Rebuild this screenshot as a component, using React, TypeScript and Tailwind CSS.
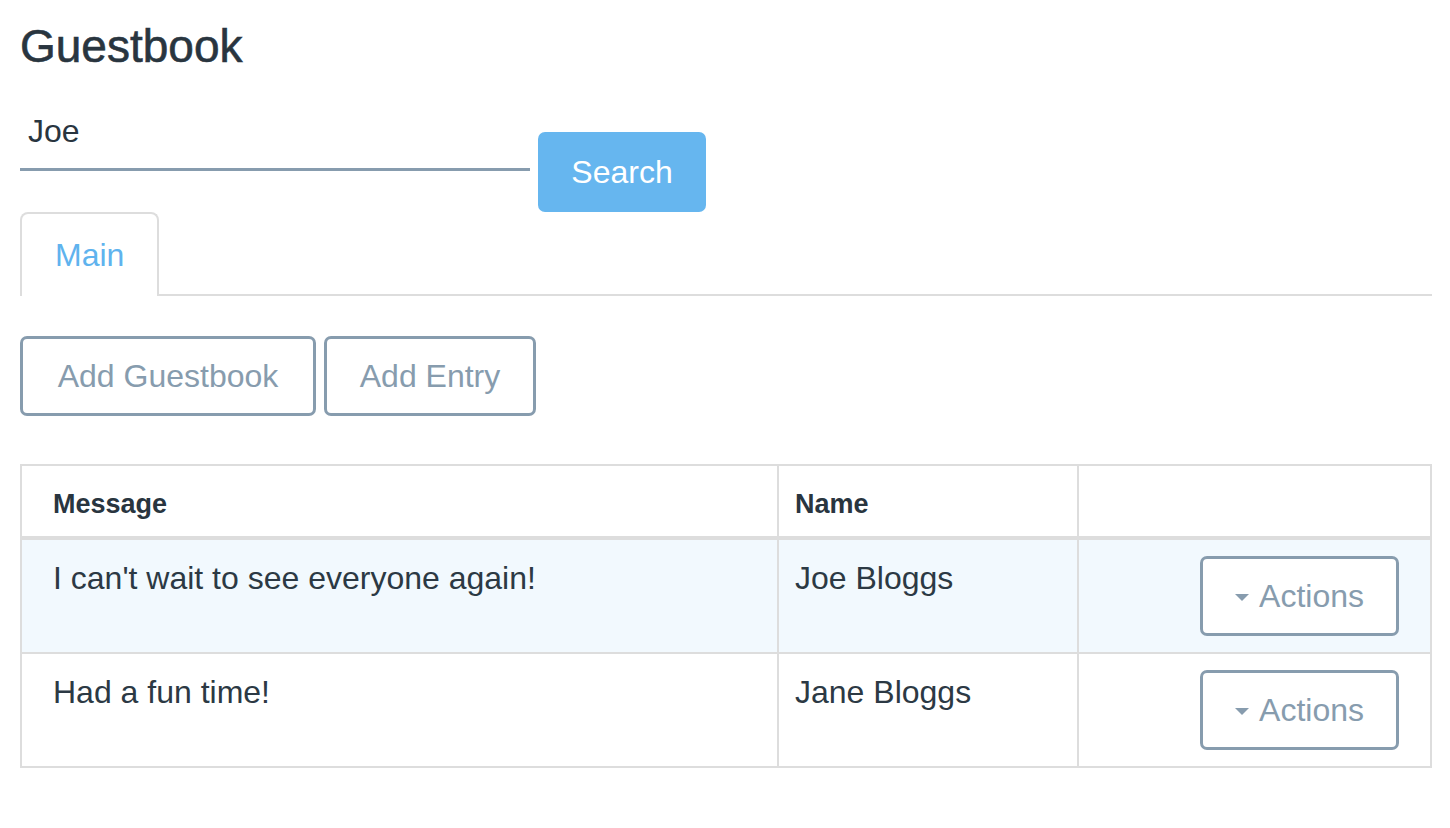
import React from "react";

const rows = [
  { message: "I can't wait to see everyone again!", name: "Joe Bloggs", highlight: true },
  { message: "Had a fun time!", name: "Jane Bloggs", highlight: false },
];

function Caret() {
  return (
    <svg width="14" height="7" viewBox="0 0 14 7" className="shrink-0">
      <path d="M0 0 L14 0 L7 7 Z" fill="#879cae" />
    </svg>
  );
}

function ActionsButton() {
  return (
    <button className="flex h-[80px] w-[199px] items-center justify-center gap-[10px] rounded-[7px] border-[3px] border-[#879cae] bg-white text-[32px] leading-[40px] text-[#879cae]">
      <span className="mt-[2px]"><Caret /></span>
      <span>Actions</span>
    </button>
  );
}

export default function App() {
  return (
    <div
      className="min-h-[828px] w-full bg-white pl-[20px] pr-[18px] text-[#29353f]"
      style={{ fontFamily: '"Liberation Sans", Arial, Helvetica, sans-serif' }}
    >
      <h1 className="pt-[21px] text-[46px] leading-[50px] [-webkit-text-stroke:0.6px]">Guestbook</h1>

      <div className="mt-[29px] flex items-start gap-[8px]">
        <input
          defaultValue="Joe"
          className="h-[71px] w-[510px] border-b-[3px] border-[#879cae] bg-transparent pl-[8px] pt-[11px] pb-[17px] text-[32px] leading-[40px] text-[#29353f] outline-none"
        />
        <button className="mt-[32px] h-[80px] w-[168px] rounded-[7px] bg-[#66b6ef] text-[32px] leading-[40px] text-white">
          Search
        </button>
      </div>

      <div className="flex">
        <div className="rounded-t-[8px] border-2 border-b-0 border-[#dddddd] px-[33px] pt-[21px] pb-[21px] text-[32px] leading-[40px] text-[#5fb3ee]">
          Main
        </div>
        <div className="flex-1 border-b-2 border-[#dddddd]" />
      </div>

      <div className="mt-[40px] flex gap-[8px]">
        <button className="h-[80px] w-[296px] rounded-[7px] border-[3px] border-[#879cae] text-[32px] leading-[40px] text-[#879cae]">
          Add Guestbook
        </button>
        <button className="h-[80px] w-[212px] rounded-[7px] border-[3px] border-[#879cae] text-[32px] leading-[40px] text-[#879cae]">
          Add Entry
        </button>
      </div>

      <table className="mt-[48px] w-[1412px] border-collapse border-2 border-[#dddddd]">
        <thead>
          <tr className="border-b-4 border-[#dddddd]">
            <th className="h-[73px] w-[757px] border-r-2 border-[#dddddd] pl-[31px] pt-[20px] text-left align-top text-[27px] font-bold leading-[36px] text-[#29353f]">
              Message
            </th>
            <th className="w-[300px] border-r-2 border-[#dddddd] pl-[16px] pt-[20px] text-left align-top text-[27px] font-bold leading-[36px] text-[#29353f]">
              Name
            </th>
            <th />
          </tr>
        </thead>
        <tbody>
          {rows.map((r) => (
            <tr
              key={r.name}
              className={`border-b-2 border-[#dddddd] ${r.highlight ? "bg-[#f2f9fe]" : "bg-white"}`}
            >
              <td className="border-r-2 border-[#dddddd] pl-[31px] pt-[18px] align-top text-[32px] leading-[40px] text-[#2c3944]">
                {r.message}
              </td>
              <td className="border-r-2 border-[#dddddd] pl-[16px] pt-[18px] align-top text-[32px] leading-[40px] text-[#2c3944]">
                {r.name}
              </td>
              <td className="py-[16px] pr-[31px] align-top">
                <div className="flex justify-end">
                  <ActionsButton />
                </div>
              </td>
            </tr>
          ))}
        </tbody>
      </table>
    </div>
  );
}
